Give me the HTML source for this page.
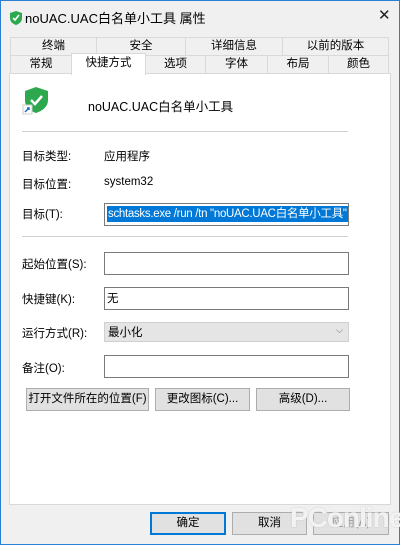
<!DOCTYPE html><html><head><meta charset="utf-8"><style>
*{box-sizing:border-box;margin:0;padding:0}
body{width:400px;height:545px;overflow:hidden;background:#f0f0f0;font-family:"Liberation Sans","Noto Sans CJK SC",sans-serif;font-size:11.5px;color:#000;position:relative}
.win{position:absolute;left:0;top:0;width:400px;height:545px;border:1px solid #2a7fd0}
.a{position:absolute;white-space:nowrap}
.tab{position:absolute;height:18px;border:1px solid #d9d9d9;border-bottom:none;background:#f0f0f0;text-align:center;line-height:17px}
.panel{position:absolute;left:9px;top:73px;width:382px;height:432px;background:#fff;border:1px solid #d9d9d9}
.in{position:absolute;left:104px;width:245px;height:22px;border:1px solid #7a7a7a;background:#fff;overflow:hidden}
.btn{position:absolute;height:23px;background:#e1e1e1;border:1px solid #adadad;text-align:center;line-height:21px}
.sep{position:absolute;left:22px;width:326px;height:1px;background:#d0d0d0}
</style></head><body><div class="win"></div>
<svg class="a" style="left:9px;top:10px" width="14" height="16" viewBox="0 0 14 16"><path d="M7 1L13 3V8C13 12 10 14 7 15C4 14 1 12 1 8V3Z" fill="#2ea84f"/><path d="M4 8L6 10L10 5" stroke="#fff" stroke-width="1.6" fill="none"/></svg>
<div class="a" style="left:25px;top:8px;font-size:13px">noUAC.UAC白名单小工具 属性</div>
<div class="a" style="left:378px;top:6px;font-size:15px;font-weight:300;color:#222">✕</div>
<div class="tab" style="left:10px;top:37px;width:87px">终端</div>
<div class="tab" style="left:96px;top:37px;width:90px">安全</div>
<div class="tab" style="left:185px;top:37px;width:98px">详细信息</div>
<div class="tab" style="left:282px;top:37px;width:107px">以前的版本</div>
<div class="tab" style="left:10px;top:55px;width:62px">常规</div>
<div class="tab" style="left:145px;top:55px;width:61px">选项</div>
<div class="tab" style="left:205px;top:55px;width:63px">字体</div>
<div class="tab" style="left:267px;top:55px;width:62px">布局</div>
<div class="tab" style="left:328px;top:55px;width:61px">颜色</div>
<div class="panel"></div>
<div class="tab" style="left:71px;top:53px;width:75px;height:22px;background:#fff;line-height:19px;z-index:2">快捷方式</div>
<svg class="a" style="left:22px;top:86px" width="28" height="30" viewBox="0 0 28 30"><path d="M14 1L26 5V14C26 21 20 25 14 27C8 25 3 21 3 14V5Z" fill="#2ea84f"/><path d="M9 14L13 18L20 10" stroke="#fff" stroke-width="2.5" fill="none"/><rect x="1" y="19" width="9" height="9" fill="#fff" stroke="#ccc"/><path d="M3 26L7 22M5 22H7V24" stroke="#1f6fc8" stroke-width="1.5" fill="none"/></svg>
<div class="a" style="left:88px;top:96px;font-size:12.5px">noUAC.UAC白名单小工具</div>
<div class="sep" style="top:131px"></div>
<div class="a" style="left:22px;top:148px">目标类型:</div><div class="a" style="left:104px;top:148px">应用程序</div>
<div class="a" style="left:22px;top:176px">目标位置:</div><div class="a" style="left:104px;top:176px">system32</div>
<div class="a" style="left:22px;top:206px">目标(T):</div>
<div class="in" style="top:203px;height:23px"><span style="position:absolute;left:2px;top:2px;height:16px;background:#0078d7;color:#fff;font-size:11.5px;line-height:16px;letter-spacing:-0.3px;padding:0 1px;white-space:nowrap">schtasks.exe /run /tn "noUAC.UAC白名单小工具"</span></div>
<div class="sep" style="top:236px"></div>
<div class="a" style="left:22px;top:256px">起始位置(S):</div><div class="in" style="top:252px;height:23px"></div>
<div class="a" style="left:22px;top:291px">快捷键(K):</div><div class="in" style="top:287px;height:23px;padding:2px 0 0 2px">无</div>
<div class="a" style="left:22px;top:325px">运行方式(R):</div><div class="in" style="top:322px;height:20px;background:#e5e5e5;border-color:#d0d0d0;padding:1px 0 0 3px">最小化<span style="position:absolute;right:5px;top:2px;font-size:9px;color:#666">⌵</span></div>
<div class="a" style="left:22px;top:360px">备注(O):</div><div class="in" style="top:355px;height:23px"></div>
<div class="btn" style="left:26px;top:388px;width:123px">打开文件所在的位置(F)</div>
<div class="btn" style="left:155px;top:388px;width:95px">更改图标(C)...</div>
<div class="btn" style="left:256px;top:388px;width:94px">高级(D)...</div>
<div class="btn" style="left:150px;top:512px;width:76px;border:2px solid #0078d7;line-height:19px">确定</div>
<div class="btn" style="left:232px;top:512px;width:75px">取消</div>
<div class="btn" style="left:313px;top:512px;width:76px;color:#999">应用(A)</div>
<div class="a" style="left:290px;top:502px;font-size:28px;color:rgba(255,255,255,0.85);font-weight:bold;letter-spacing:-1px;text-shadow:0 0 1px #aaa">PConline</div>
</body></html>
